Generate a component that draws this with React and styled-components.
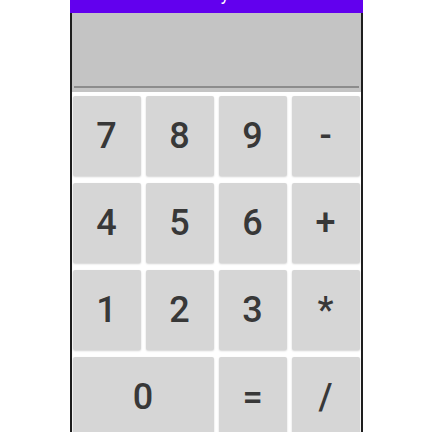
import React from "react";
import styled, { createGlobalStyle } from "styled-components";

const GlobalStyle = createGlobalStyle`
  html, body {
    margin: 0;
    padding: 0;
    background: #ffffff;
    font-family: Roboto, "Noto Sans", sans-serif;
  }
`;

const Phone = styled.div`
  width: 293px;
  height: 432px;
  margin: 0 auto;
  overflow: hidden;
  display: flex;
  flex-direction: column;
`;

const TitleBar = styled.div`
  flex: none;
  height: 13px;
  background: #6200ee;
  overflow: hidden;
  display: flex;
  justify-content: center;
`;

const Title = styled.span`
  color: #ffffff;
  font-size: 18px;
  line-height: 18px;
  margin-top: -15px;
  padding-left: 18px;
`;

const Screen = styled.div`
  flex: 1;
  border-left: 2px solid #1e1e1e;
  border-right: 2px solid #1e1e1e;
  background: #ffffff;
  display: flex;
  flex-direction: column;
`;

const Display = styled.div`
  height: 79px;
  background: #c4c4c4;
  display: flex;
  flex-direction: column;
  justify-content: flex-end;
  padding: 0 2px 4px;
  box-sizing: border-box;
`;

const Underline = styled.div`
  height: 2px;
  background: #8c8c8c;
`;

const Keypad = styled.div`
  display: grid;
  grid-template-columns: repeat(4, 68px);
  grid-auto-rows: 80px;
  column-gap: 5px;
  row-gap: 7px;
  padding: 4px 1px 0;
`;

const Key = styled.button`
  grid-column: span ${(p) => p.$span || 1};
  border: none;
  margin: 0;
  padding: 0;
  background: #d6d6d6;
  border-radius: 2px;
  box-shadow: 0 1px 2px rgba(0, 0, 0, 0.18);
  color: #383838;
  font-family: Roboto, "Noto Sans", sans-serif;
  font-size: 36px;
  font-weight: 500;
  line-height: 1;
  display: flex;
  align-items: center;
  justify-content: center;
`;

const keys = [
  ["7"], ["8"], ["9"], ["-"],
  ["4"], ["5"], ["6"], ["+"],
  ["1"], ["2"], ["3"], ["*"],
  ["0", 2], ["="], ["/"],
];

export default function App() {
  return (
    <>
      <GlobalStyle />
      <Phone>
        <TitleBar>
          <Title>y</Title>
        </TitleBar>
        <Screen>
          <Display>
            <Underline />
          </Display>
          <Keypad>
            {keys.map(([label, span]) => (
              <Key key={label} $span={span}>
                {label}
              </Key>
            ))}
          </Keypad>
        </Screen>
      </Phone>
    </>
  );
}
